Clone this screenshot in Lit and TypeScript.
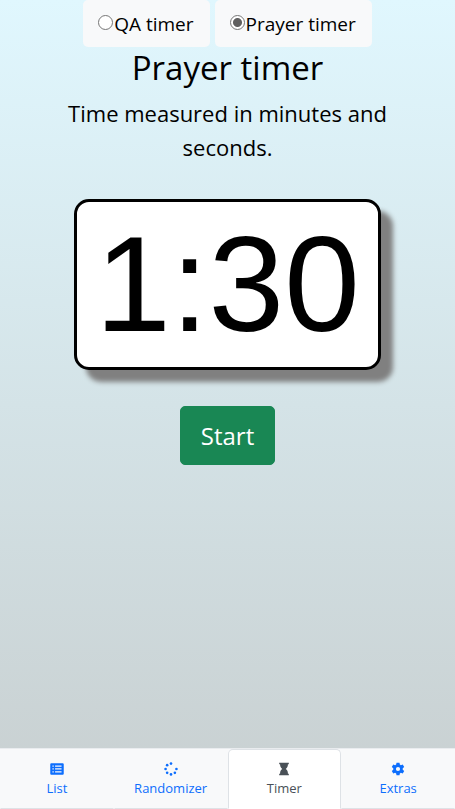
import { LitElement, html, css, svg } from "lit";
import { customElement, state } from "lit/decorators.js";

const icons = {
  list: svg`<path fill-rule="evenodd" d="M1.500 1.500h13A1.200 1.200 0 0 1 15.700 2.700v10.600a1.200 1.200 0 0 1-1.200 1.200h-13A1.200 1.200 0 0 1 .3 13.300V2.700a1.200 1.200 0 0 1 1.200-1.200zM2.800 4v1.500h1.500V4zm3 0v1.500h7.400V4zM2.800 7.200v1.500h1.500V7.200zm3 0v1.500h7.400V7.200zM2.800 10.500V12h1.500v-1.500zm3 0V12h7.400v-1.500z"/>`,
  spinner: svg`<circle cx="8" cy="1.800" r="1.500"/><circle cx="3.600" cy="3.600" r="1.500"/><circle cx="1.800" cy="8" r="1.500"/><circle cx="3.600" cy="12.400" r="1.500"/><circle cx="8" cy="14.200" r="1.500"/><circle cx="12.400" cy="12.400" r="1.500"/><circle cx="14.200" cy="8" r="1.500"/>`,
  hourglass: svg`<path d="M2.500.8h11v1.900h-1c0 2.600-.9 4.200-2.500 5.300 1.600 1.100 2.500 2.700 2.500 5.300h1v1.900h-11v-1.900h1C3.500 10.700 4.400 9.100 6 8 4.400 6.900 3.500 5.300 3.500 2.700h-1z"/>`,
  gear: svg`<path fill-rule="evenodd" d="M6.300.8h3.400l.4 2.100 1.200.7 2.100-.8 1.700 3-1.700 1.400v1.600l1.700 1.400-1.700 3-2.100-.8-1.200.7-.4 2.100H6.300l-.4-2.100-1.200-.7-2.100.8-1.700-3 1.700-1.400V7.200L.9 5.800l1.700-3 2.100.8 1.200-.7zM8 5.600a2.400 2.400 0 1 0 0 4.800 2.400 2.400 0 0 0 0-4.800z"/>`,
};

const tabs = [
  { id: "list", label: "List", icon: icons.list },
  { id: "randomizer", label: "Randomizer", icon: icons.spinner },
  { id: "timer", label: "Timer", icon: icons.hourglass },
  { id: "extras", label: "Extras", icon: icons.gear },
];

const timers = [
  { id: "qa", label: "QA timer" },
  { id: "prayer", label: "Prayer timer" },
];

@customElement("app-root")
export class AppRoot extends LitElement {
  @state() private timer = "prayer";

  static styles = css`
    :host {
      display: flex;
      flex-direction: column;
      min-height: 100vh;
      box-sizing: border-box;
      background: linear-gradient(#e0f7fe, #c8cfd0);
      color: #000;
      font-family: "Segoe UI", "Open Sans", "Noto Sans", sans-serif;
      font-size: 20px;
      line-height: 30px;
    }
    * {
      box-sizing: border-box;
    }
    main {
      flex: 1;
      display: flex;
      flex-direction: column;
      align-items: center;
      text-align: center;
    }
    .choices {
      display: flex;
      gap: 5px;
    }
    .choice {
      display: flex;
      align-items: center;
      height: 47px;
      padding: 0 16px 0 15px;
      border-radius: 5px;
      background: #f8f9fa;
      font-size: 19px;
    }
    .radio {
      appearance: none;
      width: 15px;
      height: 15px;
      margin: 0 1px 2px 0;
      border: 1px solid #767676;
      border-radius: 50%;
      background: #fff;
    }
    .radio:checked {
      background: radial-gradient(circle, #606060 4px, #fff 5px);
    }
    .title {
      margin: 1px 0 8px;
      font-size: 33px;
      line-height: 40px;
      font-weight: 400;
    }
    .hint {
      max-width: 360px;
      margin: 0;
      padding: 0 16px;
      font-size: 22px;
      line-height: 34px;
    }
    .clock {
      margin-top: 35px;
      padding: 0 18px;
      border: 3px solid #000;
      border-radius: 15px;
      background: #fff;
      box-shadow: 12px 12px 5px #808080;
      font-family: Arial, "Liberation Sans", sans-serif;
      font-size: 136px;
      line-height: 165px;
    }
    .start {
      margin-top: 36px;
      padding: 10px 20px;
      border: 1px solid #198754;
      border-radius: 5px;
      background: #198754;
      color: #fff;
      font: inherit;
      font-size: 24px;
      line-height: 37px;
    }
    .tabs {
      display: grid;
      grid-template-columns: repeat(4, 1fr);
      height: 61px;
      background: #f8f9fa;
      border-top: 1px solid #e9ecef;
    }
    .tab {
      display: flex;
      flex-direction: column;
      align-items: center;
      padding-top: 12px;
      border: 1px solid transparent;
      border-bottom-color: #dee2e6;
      color: #0d6efd;
      font-size: 13px;
      line-height: 20px;
      text-decoration: none;
    }
    .active {
      border-color: #dee2e6 #dee2e6 #fff;
      border-radius: 5px 5px 0 0;
      background: #fff;
      color: #495057;
    }
    .icon {
      width: 14px;
      height: 14px;
      margin-bottom: 2px;
      fill: currentColor;
    }
  `;

  render() {
    return html`
      <main>
        <div class="choices" role="radiogroup" aria-label="Timer type">
          ${timers.map(
            (t) => html`<label class="choice"
              ><input
                class="radio"
                type="radio"
                name="timer"
                .checked=${this.timer === t.id}
                @change=${() => (this.timer = t.id)}
              />${t.label}</label
            >`
          )}
        </div>
        <h1 class="title">${timers.find((t) => t.id === this.timer)?.label}</h1>
        <p class="hint">Time measured in minutes and seconds.</p>
        <div class="clock" role="timer">1:30</div>
        <button class="start" type="button">Start</button>
      </main>
      <nav class="tabs">
        ${tabs.map(
          (t) => html`<a class="tab ${t.id === "timer" ? "active" : ""}" href="#${t.id}">
            <svg class="icon" viewBox="0 0 16 16" aria-hidden="true">${t.icon}</svg>
            ${t.label}
          </a>`
        )}
      </nav>
    `;
  }
}
